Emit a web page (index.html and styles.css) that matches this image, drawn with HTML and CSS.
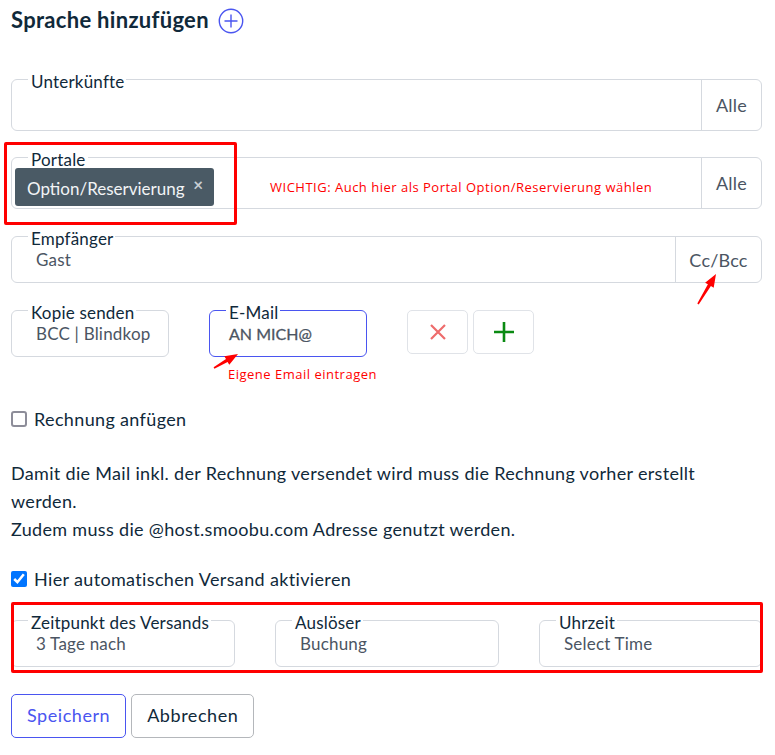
FILE: index.html
```html
<!DOCTYPE html>
<html>
    <head>
        <title>Sprache hinzufügen</title>
        <link rel="stylesheet" href="styles.css">
    </head>
    <body>
        <div class="page">
            <h1 class="title">Sprache hinzufügen
                <svg class="title-icon" width="26" height="26" viewBox="0 0 26 26">
                    <circle cx="13" cy="13" r="11.7" fill="none" stroke="#4a55f0" stroke-width="1.4"/>
                    <path d="M13 6.5V19.5M6.5 13H19.5" fill="none" stroke="#4a55f0" stroke-width="1.4"/>
                </svg>
            </h1>

            <div class="field field-tall">
                <span class="label">Unterkünfte</span>
                <div class="field-body"></div>
                <div class="addon">Alle</div>
            </div>

            <div class="field field-tall field-portal">
                <span class="label">Portale</span>
                <div class="field-body field-chips">
                    <span class="chip">Option/Reservierung<span class="chip-x">×</span></span>
                    <span class="note note-portal">WICHTIG: Auch hier als Portal Option/Reservierung wählen</span>
                </div>
                <div class="addon">Alle</div>
            </div>

            <div class="field">
                <span class="label">Empfänger</span>
                <div class="field-body value">Gast</div>
                <div class="addon addon-wide">Cc/Bcc</div>
            </div>

            <div class="copy-row">
                <div class="field field-small">
                    <span class="label">Kopie senden</span>
                    <div class="field-body value">BCC | Blindkop</div>
                </div>
                <div class="field field-small field-active">
                    <span class="label">E-Mail</span>
                    <div class="field-body value value-mail">AN MICH@</div>
                    <span class="note note-mail">Eigene Email eintragen</span>
                </div>
                <div class="icon-buttons">
                    <button class="icon-btn">
                        <svg width="18" height="18" viewBox="0 0 18 18"><path d="M2 2L16 16M16 2L2 16" fill="none" stroke="#ee6c6c" stroke-width="2.2"/></svg>
                    </button>
                    <button class="icon-btn">
                        <svg width="20" height="20" viewBox="0 0 20 20"><path d="M10 0V20M0 10H20" fill="none" stroke="#0a8a12" stroke-width="2.6"/></svg>
                    </button>
                </div>
            </div>

            <label class="check check-invoice"><input type="checkbox">Rechnung anfügen</label>

            <p class="hint">Damit die Mail inkl. der Rechnung versendet wird muss die Rechnung vorher erstellt werden.<br>Zudem muss die @host.smoobu.com Adresse genutzt werden.</p>

            <label class="check check-auto"><input type="checkbox" checked>Hier automatischen Versand aktivieren</label>

            <div class="time-row">
                <div class="field">
                    <span class="label">Zeitpunkt des Versands</span>
                    <div class="field-body value">3 Tage nach</div>
                </div>
                <div class="field">
                    <span class="label">Auslöser</span>
                    <div class="field-body value">Buchung</div>
                </div>
                <div class="field">
                    <span class="label">Uhrzeit</span>
                    <div class="field-body value">Select Time</div>
                </div>
            </div>

            <div class="actions">
                <button class="btn btn-save">Speichern</button>
                <button class="btn">Abbrechen</button>
            </div>

            <!-- annotations on top of the screenshot -->
            <div class="mark mark-portal"></div>
            <div class="mark mark-time"></div>
            <svg class="arrow arrow-cc" width="24" height="34" viewBox="0 0 24 34">
                <path d="M1.3 30.6L11.9 11.3L9.1 9.7L20 1L17.7 14.7L14.9 13.1L2.7 31.4Z" fill="#f00"/>
            </svg>
            <svg class="arrow arrow-mail" width="28" height="18" viewBox="0 0 28 18">
                <path d="M1.6 15.3L14 7.1L12.3 4.2L26 2L17.3 12.8L15.6 9.9L2.4 16.7Z" fill="#f00"/>
            </svg>
        </div>
    </body>
</html>
```

FILE: styles.css
```css
html, body {
    margin: 0;
    background-color: white;
}
.page {
    position: relative;
    height: 755px;
    box-sizing: border-box;
    padding: 6px 13px 0 11px;
    font-family: Lato, "Open Sans", sans-serif;
    font-size: 17px;
    letter-spacing: 0.2px;
    color: #10293a;
    overflow: hidden;
}
.title {
    display: flex;
    align-items: center;
    gap: 9px;
    height: 26px;
    margin: 0 0 47px 0;
    font-size: 22px;
    font-weight: 700;
    letter-spacing: 0.3px;
    white-space: nowrap;
}
.title-icon {
    margin-top: 4px;
}
.field {
    position: relative;
    display: flex;
    height: 47px;
    box-sizing: border-box;
    border: 1px solid #d5d9df;
    border-radius: 6px;
    margin-bottom: 27px;
}
.field-tall {
    height: 52px;
    margin-bottom: 26px;
}
.field-portal {
    margin-bottom: 27px;
}
.field-body {
    flex: 1;
    min-width: 0;
}
.field-chips {
    display: flex;
    align-items: flex-start;
    padding: 10px 0 0 3px;
}
.label {
    position: absolute;
    top: -7px;
    left: 16px;
    padding: 0 2px 0 3px;
    background-color: white;
    line-height: 18px;
    white-space: nowrap;
}
.value {
    padding: 12px 0 0 24px;
    line-height: 22px;
    color: #4b5563;
    white-space: nowrap;
    overflow: hidden;
}
.addon {
    width: 59px;
    border-left: 1px solid #d5d9df;
    display: flex;
    align-items: center;
    justify-content: center;
    color: #4b5563;
    font-size: 18px;
}
.addon-wide {
    width: 85px;
}
.chip {
    position: relative;
    box-sizing: border-box;
    width: 199px;
    height: 38px;
    padding-left: 12px;
    border-radius: 3px;
    background-color: #4a5a65;
    color: #f2f4f6;
    letter-spacing: 0;
    line-height: 42px;
    white-space: nowrap;
}
.chip-x {
    position: absolute;
    top: 7px;
    right: 11px;
    font-size: 17px;
    font-weight: 700;
    line-height: 20px;
    color: #c8ced3;
}
.note {
    font-family: "Open Sans", sans-serif;
    font-size: 13px;
    letter-spacing: 0.5px;
    color: #f00;
    white-space: nowrap;
}
.note-portal {
    margin: 10px 0 0 56px;
}
.note-mail {
    position: absolute;
    top: 54px;
    left: 18px;
}
.copy-row {
    display: flex;
    align-items: flex-start;
}
.field-small {
    width: 158px;
    margin: 0 40px 0 0;
    flex: none;
}
.field-active {
    border-color: #4a55f0;
}
.value-mail {
    padding-left: 19px;
    font-size: 16px;
    letter-spacing: 0;
    -webkit-text-stroke: 0.3px #4b5563;
}
.icon-buttons {
    display: flex;
    gap: 5px;
    height: 44px;
}
.icon-btn {
    display: flex;
    align-items: center;
    justify-content: center;
    width: 61px;
    padding: 0;
    background-color: white;
    border: 1px solid #e0e3e8;
    border-radius: 5px;
}
.check {
    display: flex;
    align-items: center;
    height: 24px;
    font-size: 18px;
    letter-spacing: 0.35px;
    white-space: nowrap;
}
.check input {
    width: 16px;
    height: 16px;
    margin: 0 7px 0 0;
}
.check input:not(:checked) {
    appearance: none;
    box-sizing: border-box;
    border: 2px solid #8d8d99;
    border-radius: 3px;
}
.check-invoice {
    margin-top: 50px;
}
.hint {
    margin: 28px 0 0 0;
    line-height: 28px;
    width: 720px;
    font-size: 18px;
    letter-spacing: 0.32px;
}
.check-auto {
    margin-top: 24px;
}
.time-row {
    display: grid;
    grid-template-columns: 224px 224px 223px;
    column-gap: 40px;
    margin-top: 29px;
}
.time-row .field {
    margin-bottom: 0;
}
.actions {
    display: flex;
    gap: 5px;
    margin-top: 27px;
}
.btn {
    height: 44px;
    padding: 0 15px 2px;
    background-color: white;
    border: 1px solid #b4b7bb;
    border-radius: 5px;
    font-family: Lato, "Open Sans", sans-serif;
    font-size: 18px;
    letter-spacing: 0.55px;
    color: #10293a;
}
.btn-save {
    border-color: #4a55f0;
    color: #4a55f0;
}
.mark {
    position: absolute;
    box-sizing: border-box;
    border: 3px solid #f00;
    border-radius: 2px;
}
.mark-portal {
    left: 4px;
    top: 142px;
    width: 233px;
    height: 83px;
}
.mark-time {
    left: 11px;
    top: 602px;
    width: 752px;
    height: 71px;
}
.arrow {
    position: absolute;
}
.arrow-cc {
    left: 696px;
    top: 273px;
}
.arrow-mail {
    left: 212px;
    top: 352px;
}
```
